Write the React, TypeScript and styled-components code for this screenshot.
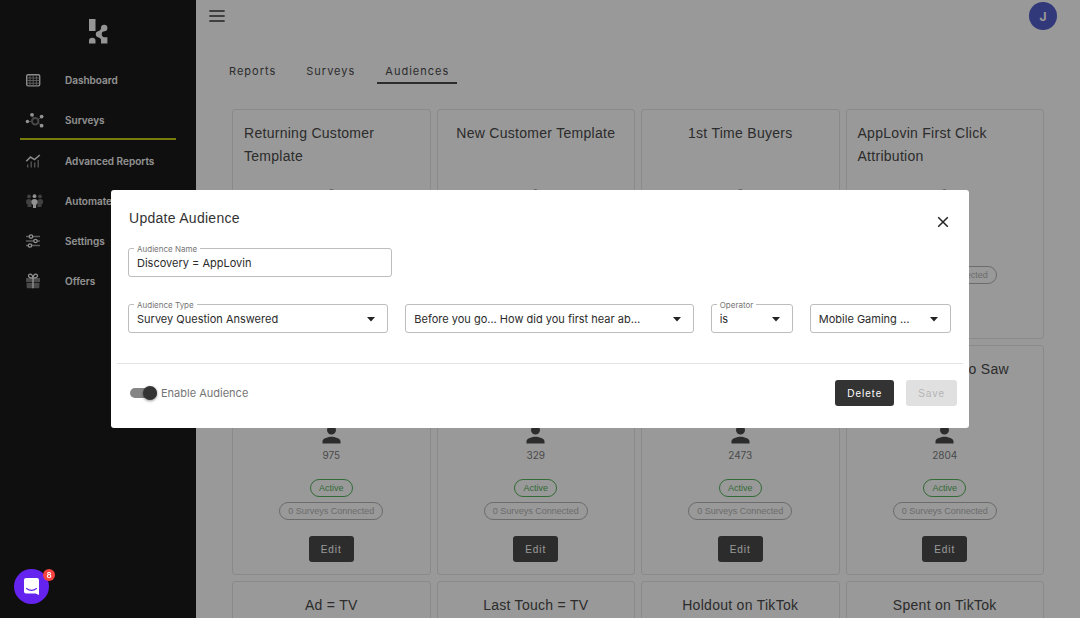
import React from "react";
import styled, { createGlobalStyle } from "styled-components";

const GlobalStyle = createGlobalStyle`
  *, *::before, *::after { box-sizing: border-box; }
  html, body, #root { height: 100%; }
  body {
    margin: 0;
    overflow: hidden;
    background: #fff;
    color: #4a4a4a;
    font-family: Inter, "Liberation Sans", Arial, sans-serif;
    font-size: 11px;
  }
  button, input, select { font: inherit; margin: 0; }
`;

const Shell = styled.div`
  display: flex;
  height: 100vh;
  overflow: hidden;
`;

const Sidebar = styled.aside`
  flex: 0 0 196px;
  background: #191919;
  padding: 19px 20px 0;
  display: flex;
  flex-direction: column;
`;

const Brand = styled.div`
  display: flex;
  justify-content: center;
  height: 41px;
`;

const NavLink = styled.a<{ $active?: boolean }>`
  display: flex;
  align-items: center;
  height: 40px;
  padding: 2px 0 0 5px;
  margin-bottom: ${(p) => (p.$active ? "1px" : "0")};
  border-bottom: 2px solid ${(p) => (p.$active ? "#c8cf16" : "transparent")};
  color: #f4f4f4;
  font-size: 10px;
  font-weight: 600;
  white-space: nowrap;
  text-decoration: none;

  svg { flex: none; width: 20px; height: 16px; margin-right: 20px; }
`;

const Main = styled.main`
  flex: 1;
  min-width: 0;
`;

const TopBar = styled.header`
  display: flex;
  justify-content: space-between;
  align-items: center;
  height: 32px;
  padding: 0 23px 0 13px;
`;

const MenuButton = styled.button`
  display: flex;
  padding: 0;
  border: 0;
  background: none;
  color: #6a6a6a;
`;

const Avatar = styled.button`
  width: 28px;
  height: 28px;
  padding: 0;
  border: 0;
  border-radius: 50%;
  background: #535fcb;
  color: #fff;
  font-size: 12px;
  font-weight: 700;
`;

const Tabs = styled.nav`
  display: flex;
  gap: 14px;
  padding: 26px 0 0 25px;
`;

const Tab = styled.a<{ $active?: boolean }>`
  height: 26px;
  padding: 0 8px;
  border-bottom: 2px solid ${(p) => (p.$active ? "#4a4a4a" : "transparent")};
  color: #4a4a4a;
  font-size: 11px;
  line-height: 26px;
  letter-spacing: 1px;
  text-decoration: none;
`;

const Grid = styled.section`
  display: grid;
  grid-template-columns: repeat(4, minmax(0, 1fr));
  grid-auto-rows: 230px;
  gap: 6px;
  padding: 25px 36px 0;
`;

const Card = styled.article`
  display: flex;
  flex-direction: column;
  align-items: center;
  padding: 12px 11px;
  border: 1px solid #e6e6e6;
  border-radius: 3px;
`;

const CardTitle = styled.h2`
  margin: 0 0 17px;
  min-height: 46px;
  font-family: "Liberation Sans", Arial, sans-serif;
  font-size: 14px;
  font-weight: 400;
  line-height: 23px;
  letter-spacing: 0.02em;
`;

const Count = styled.div`
  margin-bottom: 17px;
  color: #7c7c7c;
  font-size: 10px;
  line-height: 14px;
`;

const Chip = styled.span<{ $green?: boolean }>`
  height: 18px;
  padding: 0 8px;
  margin-bottom: 5px;
  border: 1px solid ${(p) => (p.$green ? "#55b25a" : "#b4b4b4")};
  border-radius: 9px;
  color: ${(p) => (p.$green ? "#55b25a" : "#b4b4b4")};
  font-family: "Liberation Sans", Arial, sans-serif;
  font-size: 9px;
  line-height: 16px;
  white-space: nowrap;
`;

const Button = styled.button<{ $shade?: string }>`
  height: 26px;
  padding: 0 12px;
  border: 0;
  border-radius: 3px;
  background: ${(p) => p.$shade ?? "#333"};
  color: #fff;
  font-family: "Liberation Sans", Arial, sans-serif;
  font-size: 10px;
  letter-spacing: 1px;

  &:disabled { background: #e0e0e0; color: #b4b4b4; }
`;

const EditButton = styled(Button)`
  margin-top: auto;
`;

const Overlay = styled.div`
  position: fixed;
  inset: 0;
  display: flex;
  align-items: center;
  justify-content: center;
  padding: 0 32px;
  background: rgba(0, 0, 0, 0.4);
`;

const Dialog = styled.div`
  width: 100%;
  max-width: 858px;
  padding: 0 6px;
  border-radius: 3px;
  background: #fff;
  color: #333;
`;

const DialogHeader = styled.header`
  display: flex;
  justify-content: space-between;
  align-items: flex-start;
  padding: 16px 12px 0 12px;
`;

const DialogTitle = styled.h1`
  margin: 0;
  font-family: "Liberation Sans", Arial, sans-serif;
  font-size: 14px;
  font-weight: 400;
  line-height: 24px;
  letter-spacing: 0.02em;
`;

const CloseButton = styled.button`
  display: flex;
  padding: 8px 0;
  border: 0;
  background: none;
  color: #222;
`;

const Fields = styled.div`
  display: grid;
  grid-template-columns: 260fr 288fr 82fr 141fr;
  gap: 27px 17px;
  padding: 10px 12px 30px 11px;
`;

const NameRow = styled.div`
  grid-column: 1 / -1;
  width: 264px;
`;

const Field = styled.div`
  position: relative;
  min-width: 0;

  label {
    position: absolute;
    top: -5px;
    left: 6px;
    padding: 0 3px;
    background: #fff;
    color: #757575;
    font-size: 8px;
    line-height: 12px;
  }

  input, select {
    display: block;
    width: 100%;
    height: 29px;
    padding: 1px 8px 0;
    border: 1px solid #bdbdbd;
    border-radius: 3px;
    background: #fff;
    color: #2b2b2b;
    font-size: 11px;
    outline: 0;
  }

  select {
    appearance: none;
    padding-right: 36px;
    overflow: hidden;
    text-overflow: ellipsis;
    white-space: nowrap;
  }

  svg {
    position: absolute;
    top: 13px;
    right: 13px;
    pointer-events: none;
  }
`;

const DialogFooter = styled.footer`
  display: flex;
  align-items: center;
  gap: 12px;
  height: 65px;
  padding: 0 6px 6px 13px;
  border-top: 1px solid #e4e4e4;
`;

const SwitchLabel = styled.label`
  display: flex;
  align-items: center;
  gap: 4px;
  margin-right: auto;
  color: #757575;
  font-size: 11px;
`;

const Switch = styled.input.attrs({ type: "checkbox", role: "switch" })`
  appearance: none;
  display: flex;
  align-items: center;
  justify-content: flex-end;
  width: 27px;
  height: 10px;
  border-radius: 5px;
  background: #858585;

  &::before {
    content: "";
    width: 14px;
    height: 14px;
    flex: none;
    border-radius: 50%;
    background: #333;
    box-shadow: 0 1px 3px rgba(0, 0, 0, 0.45);
  }
`;

const Launcher = styled.button`
  position: fixed;
  left: 14px;
  bottom: 14px;
  display: flex;
  align-items: center;
  justify-content: center;
  width: 35px;
  height: 35px;
  padding: 0;
  border: 0;
  border-radius: 50%;
  background: #6423ee;
`;

const Badge = styled.span`
  position: absolute;
  top: 0;
  right: -6px;
  width: 12px;
  height: 12px;
  border-radius: 50%;
  background: #f5433f;
  color: #fff;
  font-size: 8px;
  font-weight: 600;
  line-height: 12px;
`;

const Logo = () => (
  <svg width="19" height="25" viewBox="0 0 19 25" fill="#f8f8f8" aria-hidden="true">
    <path d="M0 0h6.500v12H0z" />
    <path d="M0 24.500v-2.500a3.250 3.250 0 0 1 6.500 0v2.500z" />
    <circle cx="15.200" cy="9" r="3.200" />
    <path d="M12 8.600c.2 2.600-1.200 3-3 3.600a3.100 3.100 0 0 0 0 6c1.700.5 2.700 1 3 2.600v3.700h6.400v-6.200h-3c-1.600-.1-2.700-1.500-2.700-3.100s.9-2.800 3-3.100z" />
  </svg>
);

const DashboardIcon = () => (
  <svg viewBox="0 0 20 16" fill="none" aria-hidden="true">
    <rect x="1.700" y="2.700" width="13" height="11.200" rx="1.400" stroke="#e8e8e8" strokeWidth="1.400" />
    <path d="M5 3v11M8.200 3v11M11.400 3v11M2 6h12.500M2 8.500h12.500M2 11.200h12.500" stroke="#a0a0a0" strokeWidth=".9" />
  </svg>
);

const SurveysIcon = () => (
  <svg viewBox="0 0 20 16" fill="none" aria-hidden="true">
    <path d="M2.500 9.500h4M7 3l2 4M16.500 5l-4 3M16.500 13.500l-4-3" stroke="#777" strokeWidth="1" />
    <circle cx="10.200" cy="9.200" r="3.200" stroke="#777" strokeWidth="2" />
    <g fill="#f4f4f4">
      <circle cx="2.400" cy="9.500" r="1.700" />
      <circle cx="7" cy="2.800" r="1.900" />
      <circle cx="16.600" cy="4.600" r="1.900" />
      <circle cx="16.600" cy="13.700" r="1.900" />
    </g>
  </svg>
);

const ReportsIcon = () => (
  <svg viewBox="0 0 20 16" fill="none" aria-hidden="true">
    <path d="M2.700 14.500v-3M6.200 14.500V8.500M9.700 14.500V9.500M13.200 14.500V7" stroke="#8a8a8a" strokeWidth="1.400" />
    <path d="M1.300 8.200 5.500 4l4 2.600 5.300-4.600" stroke="#e8e8e8" strokeWidth="1.600" />
  </svg>
);

const AutomateIcon = () => (
  <svg viewBox="0 0 20 16" aria-hidden="true">
    <g fill="#6c6c6c">
      <circle cx="4" cy="3.400" r="1.900" />
      <circle cx="15" cy="3.400" r="1.900" />
      <path d="M1 8.500C1 6.800 2.300 6 4 6s2.500 1 2.500 2.500V14h-4v-2.500C1.500 11 1 10 1 8.500zM18.200 8.500C18.200 6.800 16.900 6 15.200 6s-2.700 1-2.700 2.500V14h4v-2.500c1.200-.5 1.700-1.500 1.700-3z" />
    </g>
    <g fill="#f0f0f0">
      <circle cx="9.500" cy="3.200" r="1.900" />
      <path d="M6.300 8.700C6.300 6.900 7.700 6 9.500 6s3.200.9 3.200 2.700c0 1.500-.6 2.500-1.600 3V15H8v-3.300c-1.100-.5-1.700-1.500-1.700-3z" />
    </g>
  </svg>
);

const SettingsIcon = () => (
  <svg viewBox="0 0 20 16" fill="none" strokeWidth="1.300" aria-hidden="true">
    <path d="M1 3.500h14M1 8h14M1 12.500h14" stroke="#999" />
    <g stroke="#f0f0f0" fill="#191919">
      <circle cx="6" cy="3.500" r="1.700" />
      <circle cx="10.500" cy="8" r="1.700" />
      <circle cx="5" cy="12.500" r="1.700" />
    </g>
  </svg>
);

const OffersIcon = () => (
  <svg viewBox="0 0 20 16" fill="none" aria-hidden="true">
    <path d="M1 5h14v4H1zM1.600 9.700h12.800V14a1.200 1.200 0 0 1-1.200 1.200H2.800A1.200 1.200 0 0 1 1.600 14z" fill="#7c7c7c" />
    <path d="M8 5v10.200" stroke="#f0f0f0" strokeWidth="1.400" />
    <path d="M8 5C6.500 5 3.500 4.600 3.500 2.700 3.500.500 7.500.200 8 5zM8 5c1.500 0 4.500-.4 4.500-2.300C12.500.500 8.500.200 8 5z" stroke="#f0f0f0" strokeWidth="1.300" />
  </svg>
);

const PersonIcon = () => (
  <svg width="27" height="27" viewBox="0 0 24 24" fill="currentColor" aria-hidden="true">
    <path d="M12 12c2.210 0 4-1.790 4-4s-1.790-4-4-4-4 1.790-4 4 1.790 4 4 4zm0 2c-2.670 0-8 1.340-8 4v2h16v-2c0-2.660-5.330-4-8-4z" />
  </svg>
);

const Caret = () => (
  <svg width="8" height="5" viewBox="0 0 8 5" fill="#222" aria-hidden="true">
    <path d="M0 0h8L4 4.500z" />
  </svg>
);

const navItems = [
  { label: "Dashboard", icon: <DashboardIcon /> },
  { label: "Surveys", icon: <SurveysIcon />, active: true },
  { label: "Advanced Reports", icon: <ReportsIcon /> },
  { label: "Automate", icon: <AutomateIcon /> },
  { label: "Settings", icon: <SettingsIcon /> },
  { label: "Offers", icon: <OffersIcon /> },
];

const audiences = [
  { title: "Returning Customer Template", count: 0 },
  { title: "New Customer Template", count: 0 },
  { title: "1st Time Buyers", count: 0 },
  { title: "AppLovin First Click Attribution", count: 0 },
  { title: "Discovery = AppLovin", count: 975 },
  { title: "Discovery = TV", count: 329 },
  { title: "Discovery = TikTok", count: 2473 },
  { title: "Shoppers Who Saw", count: 2804 },
  { title: "Ad = TV", count: 0 },
  { title: "Last Touch = TV", count: 0 },
  { title: "Holdout on TikTok", count: 0 },
  { title: "Spent on TikTok", count: 0 },
];

interface SelectFieldProps {
  id: string;
  label?: string;
  name: string;
  value: string;
}

const SelectField = ({ id, label, name, value }: SelectFieldProps) => (
  <Field>
    <select id={id} aria-label={label ? undefined : name} defaultValue={value}>
      <option>{value}</option>
    </select>
    {label && <label htmlFor={id}>{label}</label>}
    <Caret />
  </Field>
);

export default function App() {
  return (
    <>
      <GlobalStyle />
      <Shell>
        <Sidebar>
          <Brand><Logo /></Brand>
          {navItems.map((item) => (
            <NavLink key={item.label} href="#" $active={item.active}>
              {item.icon}
              {item.label}
            </NavLink>
          ))}
        </Sidebar>
        <Main>
          <TopBar>
            <MenuButton aria-label="Toggle menu">
              <svg width="16" height="14" viewBox="0 0 16 14" stroke="currentColor" strokeWidth="1.800" strokeLinecap="round">
                <path d="M1 2h14M1 7h14M1 12h14" />
              </svg>
            </MenuButton>
            <Avatar aria-label="Account">J</Avatar>
          </TopBar>
          <Tabs>
            <Tab href="#">Reports</Tab>
            <Tab href="#">Surveys</Tab>
            <Tab href="#" $active>Audiences</Tab>
          </Tabs>
          <Grid>
            {audiences.map((a) => (
              <Card key={a.title}>
                <CardTitle>{a.title}</CardTitle>
                <PersonIcon />
                <Count>{a.count}</Count>
                <Chip $green>Active</Chip>
                <Chip>0 Surveys Connected</Chip>
                <EditButton $shade="#4a4a4a">Edit</EditButton>
              </Card>
            ))}
          </Grid>
        </Main>
      </Shell>
      <Overlay>
        <Dialog role="dialog" aria-modal="true" aria-labelledby="dialog-title">
          <DialogHeader>
            <DialogTitle id="dialog-title">Update Audience</DialogTitle>
            <CloseButton aria-label="Close">
              <svg width="16" height="16" viewBox="0 0 16 16" stroke="currentColor" strokeWidth="1.500">
                <path d="m3.200 3.200 9.600 9.600M12.800 3.200l-9.600 9.600" />
              </svg>
            </CloseButton>
          </DialogHeader>
          <Fields>
            <NameRow>
              <Field>
                <input id="audience-name" type="text" defaultValue="Discovery = AppLovin" />
                <label htmlFor="audience-name">Audience Name</label>
              </Field>
            </NameRow>
            <SelectField id="type" label="Audience Type" name="Audience Type" value="Survey Question Answered" />
            <SelectField id="question" name="Question" value="Before you go... How did you first hear ab…" />
            <SelectField id="operator" label="Operator" name="Operator" value="is" />
            <SelectField id="answer" name="Answer" value="Mobile Gaming …" />
          </Fields>
          <DialogFooter>
            <SwitchLabel>
              <Switch defaultChecked />
              Enable Audience
            </SwitchLabel>
            <Button>Delete</Button>
            <Button disabled>Save</Button>
          </DialogFooter>
        </Dialog>
      </Overlay>
      <Launcher aria-label="Open chat, 8 unread">
        <svg width="17" height="19" viewBox="0 0 17 19" aria-hidden="true">
          <path d="M3 1h11a2 2 0 0 1 2 2v15l-3.500-1.500H3a2 2 0 0 1-2-2V3a2 2 0 0 1 2-2z" fill="#fff" />
          <path d="M3.500 11.500c3 2.300 7 2.300 10 0" fill="none" stroke="#6423ee" strokeWidth="1.100" strokeLinecap="round" />
        </svg>
        <Badge>8</Badge>
      </Launcher>
    </>
  );
}
